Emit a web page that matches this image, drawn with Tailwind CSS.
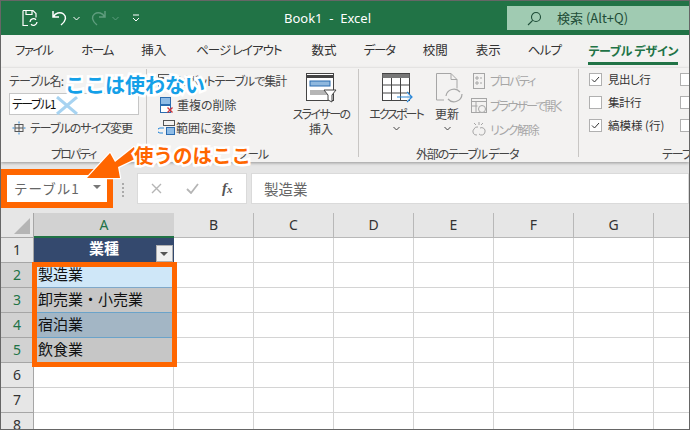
<!DOCTYPE html>
<html lang="ja">
<head>
<meta charset="UTF-8">
<title>Excel</title>
<script src="https://cdn.jsdelivr.net/npm/@tailwindcss/browser@4"></script>
</head>
<body class="w-[690px] h-[430px] overflow-hidden bg-white font-['Noto_Sans_CJK_JP','Noto_Sans',sans-serif] text-[#444] [font-feature-settings:'palt']">
<div class="relative w-[690px] h-[430px] overflow-hidden border border-[#666]">

  <!-- title bar -->
  <div class="h-[34px] bg-[#217346] flex items-center text-white relative">
    <svg class="ml-[20px] w-[18px] h-[18px]" viewBox="0 0 18 18" fill="none" stroke="#fff" stroke-width="1.2"><path d="M2 1.5h10l3 3v4M2 1.5v15h5M5 1.5v4h6v-4"/><path d="M9 13a3.5 3.5 0 0 1 6-2.200M16 13a3.500 3.500 0 0 1-6 2.200" stroke-width="1.300"/></svg>
    <svg class="ml-[12px] w-[18px] h-[18px]" viewBox="0 0 18 18" fill="none" stroke="#fff" stroke-width="1.500"><path d="M2 2v6h6M2.500 8C4 4 9 2.500 12.500 5c3 2.500 3 6.500-2.500 11"/></svg>
    <svg class="ml-[4px] w-[7px] h-[5px]" viewBox="0 0 7 5" fill="none" stroke="#fff"><path d="M.5 1l3 3 3-3"/></svg>
    <svg class="ml-[9px] w-[18px] h-[18px]" viewBox="0 0 18 18" fill="none" stroke="#5f9d7e" stroke-width="1.500"><path d="M16 2v6h-6M15.500 8C14 4 9 2.500 5.500 5c-3 2.500-3 6.500 2.500 11"/></svg>
    <svg class="ml-[5px] w-[7px] h-[5px]" viewBox="0 0 7 5" fill="none" stroke="#5f9d7e"><path d="M.5 1l3 3 3-3"/></svg>
    <svg class="ml-[13px] w-[8px] h-[8px]" viewBox="0 0 8 8" fill="none" stroke="#fff"><path d="M1 1h6M1 4l3 3 3-3"/></svg>
    <span class="absolute left-[283px] top-[6px] text-[13px] leading-[22px] whitespace-pre font-['Noto_Sans',sans-serif]">Book1  -  Excel</span>
    <div class="absolute left-[506px] top-[5px] w-[182px] h-[24px] bg-[#a0cbb2] flex items-center text-[#1e4d38]">
      <svg class="ml-[20px] w-[15px] h-[15px]" viewBox="0 0 15 15" fill="none" stroke="#1e4d38" stroke-width="1.100"><circle cx="9" cy="6" r="4.500"/><path d="M5.700 9.300L1 14"/></svg>
      <span class="ml-[15px] text-[13px] whitespace-nowrap">検索 (Alt+Q)</span>
    </div>
  </div>

  <!-- tabs -->
  <div class="h-[33px] bg-[#f3f2f1] flex items-center text-[12.500px] text-[#333] relative whitespace-nowrap pl-[14px] pb-[2px]">
    <span class="tracking-[-1.500px]">ファイル</span>
    <span class="ml-[29px] tracking-[-1.300px]">ホーム</span>
    <span class="ml-[28px]">挿入</span>
    <span class="ml-[30px] tracking-[-1px]">ページ レイアウト</span>
    <span class="ml-[30px]">数式</span>
    <span class="ml-[27px] tracking-[-1.300px]">データ</span>
    <span class="ml-[28px]">校閲</span>
    <span class="ml-[28px]">表示</span>
    <span class="ml-[27px] tracking-[-0.700px]">ヘルプ</span>
    <span class="ml-[27px] text-[#217346] font-bold relative tracking-[-0.300px] text-[12px]">テーブル デザイン<span class="absolute left-0 right-0 top-[20px] h-[3px] bg-[#217346]"></span></span>
  </div>

  <!-- ribbon -->
  <div class="h-[94px] bg-[#f3f2f1] flex text-[12px] text-[#444] whitespace-nowrap shadow-[0_1px_3px_rgba(0,0,0,0.35)] relative z-10">

    <!-- properties -->
    <div class="w-[145px] shrink-0 relative flex flex-col pl-[8px] pt-[4px]">
      <span class="leading-[18px] tracking-[-0.800px]">テーブル名:</span>
      <div class="mt-[3px] w-[130px] h-[22px] bg-white border border-[#c6c6c6] text-[12px] tracking-[-1.500px] leading-[20px] text-[#111] pl-[2px]">テーブル1</div>
      <div class="mt-[4px] flex items-center gap-[4px] pl-[3px]">
        <svg class="w-[14px] h-[14px] shrink-0" viewBox="0 0 14 14" fill="none" stroke="#555"><rect x="3" y="3.500" width="8" height="7"/><path d="M3 7h8M7 3.500v7"/><path d="M7 .5v2M7 11.500v2M.5 7h2M11.500 7h2" stroke="#2b88d8"/></svg>
        <span class="tracking-[-1px]">テーブルのサイズ変更</span>
      </div>
      <span class="absolute left-[50px] top-[77px] leading-[18px] tracking-[-1.800px]">プロパティ</span>
    </div>
    <div class="w-px h-[88px] mt-[1px] bg-[#c8c6c4]"></div>

    <!-- tools -->
    <div class="w-[86px] shrink-0 relative flex flex-col pl-[11px] pt-[4px] gap-[6px]">
      <div class="flex items-center h-[18px]">
        <svg class="w-[16px] h-[14px] shrink-0" viewBox="0 0 16 14" fill="none" stroke="#555"><rect x=".5" y=".5" width="15" height="13"/><path d="M.5 4h15" stroke-width="2"/></svg>
        <span class="ml-[3px] tracking-[-1px]">ピボットテーブルで集計</span>
      </div>
      <div class="flex items-center gap-[3px] h-[18px] pl-[2px]">
        <svg class="w-[14px] h-[17px] shrink-0" viewBox="0 0 14 17" fill="none"><rect x=".5" y=".5" width="10" height="7" fill="#8fbce6" stroke="#2b6cb0"/><rect x=".5" y="8.500" width="10" height="7" fill="#fff" stroke="#2b6cb0"/><path d="M7.500 10.500l5 5M12.500 10.500l-5 5" stroke="#d13438" stroke-width="1.400"/></svg>
        <span>重複の削除</span>
      </div>
      <div class="flex items-center gap-[1px] h-[18px] mt-[-1px]">
        <svg class="w-[17px] h-[16px] shrink-0" viewBox="0 0 17 16" fill="none" stroke="#555"><rect x="5.500" y=".5" width="11" height="5"/><rect x="8.500" y="7.500" width="8" height="7" fill="#8fbce6" stroke="#2b6cb0"/><path d="M6 8H2a1.500 1.500 0 0 0 0 5h3" stroke="#2b88d8"/></svg>
        <span>範囲に変換</span>
      </div>
      <span class="absolute left-[90px] top-[77px] leading-[18px] tracking-[-1px]">ツール</span>
    </div>

    <!-- slicer -->
    <div class="w-[125px] shrink-0 flex flex-col items-center pt-[4px] pr-[4px] pl-[55px]">
      <svg class="w-[32px] h-[30px] shrink-0 mt-[1px] ml-[2px]" viewBox="0 0 32 30" fill="none"><rect x=".5" y=".5" width="27" height="27" stroke="#444" fill="#fff"/><path d="M.5 3.500h27" stroke="#444" stroke-width="3"/><rect x="4" y="8" width="20" height="5" fill="#8fb8de" stroke="#2b6cb0"/><rect x="4" y="17" width="20" height="5" fill="#b5b5b5"/><path d="M18 17h12l-4 5v7l-4-2v-5z" fill="#fff" stroke="#444"/></svg>
      <span class="leading-[15px] mt-[3px] tracking-[-1.600px]">スライサーの</span>
      <span class="leading-[15px]">挿入</span>
    </div>
    <div class="w-px h-[88px] mt-[1px] bg-[#c8c6c4]"></div>

    <!-- external data -->
    <div class="w-[219px] shrink-0 relative flex">
      <div class="w-[74px] shrink-0 flex flex-col items-center pt-[4px]">
        <svg class="w-[32px] h-[30px] shrink-0 mt-[1px] ml-[4px]" viewBox="0 0 32 30" fill="none"><rect x=".5" y=".5" width="27" height="27" stroke="#444" fill="#fff"/><path d="M.5 3h27" stroke="#777" stroke-width="4"/><path d="M.5 12h27M.5 20h27M9.500 5v23M18.500 5v23" stroke="#444"/><path d="M15 24h15M25 19l5 5-5 5" stroke="#2b88d8" stroke-width="1.200" fill="#f3f2f1"/></svg>
        <span class="leading-[18px] mt-[2px] tracking-[-2px]">エクスポート</span>
        <svg class="w-[7px] h-[5px] mt-[3px]" viewBox="0 0 7 5" fill="none" stroke="#444"><path d="M.5 1l3 3 3-3"/></svg>
      </div>
      <div class="w-[28px] shrink-0 flex flex-col items-center pt-[4px]">
        <svg class="w-[28px] h-[32px] shrink-0 mt-[1px] ml-[6px]" viewBox="0 0 28 32" fill="none" stroke="#a6a6a6"><path d="M.5 27V.5H15l6 6v9M15 .5v6h6M.5 27H8"/><path d="M10 23a8 8 0 0 1 14-4M26 21a8 8 0 0 1-14 5" stroke-width="1.200"/></svg>
        <span class="leading-[18px]">更新</span>
        <svg class="w-[7px] h-[5px] mt-[3px]" viewBox="0 0 7 5" fill="none" stroke="#444"><path d="M.5 1l3 3 3-3"/></svg>
      </div>
      <div class="flex flex-col text-[#a6a6a6] pt-[4px] gap-[7px]">
        <div class="flex items-center gap-[5px] h-[17px] pl-[12px]">
          <svg class="w-[12px] h-[16px] shrink-0" viewBox="0 0 12 16" fill="none" stroke="#a6a6a6"><rect x=".5" y=".5" width="11" height="15"/><path d="M3 4h2v2H3zM3 9h2v2H3zM7 5h2M7 10h2"/></svg>
          <span class="tracking-[-1.800px]">プロパティ</span>
        </div>
        <div class="flex items-center gap-[3px] h-[17px] pl-[10px] mt-[1px]">
          <svg class="w-[16px] h-[16px] shrink-0" viewBox="0 0 16 16" fill="none" stroke="#a6a6a6"><rect x=".5" y=".5" width="15" height="14"/><path d="M.5 3.500h15M.5 8h6M5 3.500v11"/><circle cx="11" cy="11" r="3.500" fill="#f3f2f1"/></svg>
          <span class="tracking-[-1.800px]">ブラウザーで開く</span>
        </div>
        <div class="flex items-center gap-[2px] h-[17px] pl-[10px]">
          <svg class="w-[17px] h-[17px] shrink-0" viewBox="0 0 17 17" fill="none" stroke="#a6a6a6"><path d="M7 6a3.500 3.500 0 0 0-4 2 3.500 3.500 0 0 0 3 6M9 7a3.500 3.500 0 0 1 5 4 3.500 3.500 0 0 1-6 2M8 1v3M12 2l-2 2M3 2l2 2"/></svg>
          <span class="tracking-[-1.400px]">リンク解除</span>
        </div>
      </div>
      <span class="absolute left-[57px] top-[77px] leading-[18px] tracking-[-1.200px]">外部のテーブル データ</span>
    </div>
    <div class="w-px h-[88px] mt-[1px] bg-[#c8c6c4]"></div>

    <!-- style options -->
    <div class="flex-1 relative flex flex-col pl-[10px] pt-[5px] gap-[10px] text-[#333] text-[11.500px]">
      <div class="flex items-center gap-[6px] h-[13px]">
        <span class="w-[13px] h-[13px] bg-white border border-[#b0b0b0] flex items-center justify-center"><svg class="w-[9px] h-[9px]" viewBox="0 0 9 9" fill="none" stroke="#333"><path d="M1 4.500l2.500 2.500L8 2"/></svg></span>
        <span class="tracking-[-0.500px]">見出し行</span>
        <span class="absolute left-[101px] w-[13px] h-[13px] bg-white border border-[#b0b0b0]"></span>
      </div>
      <div class="flex items-center gap-[6px] h-[13px]">
        <span class="w-[13px] h-[13px] bg-white border border-[#b0b0b0]"></span>
        <span class="tracking-[-0.500px]">集計行</span>
        <span class="absolute left-[101px] w-[13px] h-[13px] bg-white border border-[#b0b0b0]"></span>
      </div>
      <div class="flex items-center gap-[6px] h-[13px]">
        <span class="w-[13px] h-[13px] bg-white border border-[#b0b0b0] flex items-center justify-center"><svg class="w-[9px] h-[9px]" viewBox="0 0 9 9" fill="none" stroke="#333"><path d="M1 4.500l2.500 2.500L8 2"/></svg></span>
        <span>縞模様 (行)</span>
        <span class="absolute left-[101px] w-[13px] h-[13px] bg-white border border-[#b0b0b0]"></span>
      </div>
      <span class="absolute left-[83px] top-[77px] leading-[18px] text-[12px] tracking-[-1px] text-[#444]">テーブル スタイルのオプション</span>
    </div>
  </div>

  <!-- formula bar -->
  <div class="h-[51px] bg-[#e6e6e6] flex items-start pt-[11px] [font-feature-settings:normal]">
    <div class="w-[108px] h-[31px] ml-[4px] bg-white flex items-center text-[13.500px] text-[#666] pl-[9px] relative">
      <span class="tracking-[1px]">テーブル1</span>
      <span class="absolute right-[12px] top-[12px] w-0 h-0 border-x-[4px] border-x-transparent border-t-[4px] border-t-[#777]"></span>
    </div>
    <div class="ml-[9px] mt-[10px] flex flex-col gap-[2px]">
      <span class="w-[2px] h-[2px] bg-[#aaa]"></span><span class="w-[2px] h-[2px] bg-[#aaa]"></span><span class="w-[2px] h-[2px] bg-[#aaa]"></span><span class="w-[2px] h-[2px] bg-[#aaa]"></span>
    </div>
    <div class="ml-[13px] w-[110px] h-[31px] bg-white border border-[#dadada] flex items-center text-[#b5b5b5] relative">
      <svg class="absolute left-[13px] top-[9px] w-[11px] h-[11px]" viewBox="0 0 11 11" fill="none" stroke="#b5b5b5" stroke-width="1.400"><path d="M1 1l9 9M10 1l-9 9"/></svg>
      <svg class="absolute left-[48px] top-[9px] w-[13px] h-[11px]" viewBox="0 0 13 11" fill="none" stroke="#b5b5b5" stroke-width="1.800"><path d="M1 6l4 4 7-9"/></svg>
      <span class="absolute left-[84px] top-[4px] text-[15px] leading-[20px] italic font-bold text-[#555] font-['Liberation_Serif',serif]">f<span class="text-[11px]">x</span></span>
    </div>
    <div class="ml-[4px] flex-1 h-[31px] bg-white border border-[#dadada] flex items-center text-[14.500px] text-[#666] pl-[12px]">製造業</div>
  </div>

  <!-- sheet -->
  <div class="grid grid-cols-[33px_140px_80px_80px_80px_80px_80px_80px_1fr] grid-rows-[25px_25px_25px_25px_25px_25px_25px_25px_25px] text-[15px] text-[#333] leading-none [font-feature-settings:normal]">
    <!-- header row -->
    <div class="bg-[#e6e6e6] border-r border-b border-[#a6a6a6] relative"><span class="absolute right-[3px] bottom-[3px] w-0 h-0 border-l-[16px] border-l-transparent border-b-[16px] border-b-[#b5b5b5]"></span></div>
    <div class="bg-[#d2d2d2] border-b-2 border-[#217346] flex items-center justify-center text-[#217346] font-['Noto_Sans',sans-serif] text-[14px]">A</div>
    <div class="bg-[#e6e6e6] border-r border-b border-[#b8b8b8] flex items-center justify-center font-['Noto_Sans',sans-serif] text-[14px]">B</div>
    <div class="bg-[#e6e6e6] border-r border-b border-[#b8b8b8] flex items-center justify-center font-['Noto_Sans',sans-serif] text-[14px]">C</div>
    <div class="bg-[#e6e6e6] border-r border-b border-[#b8b8b8] flex items-center justify-center font-['Noto_Sans',sans-serif] text-[14px]">D</div>
    <div class="bg-[#e6e6e6] border-r border-b border-[#b8b8b8] flex items-center justify-center font-['Noto_Sans',sans-serif] text-[14px]">E</div>
    <div class="bg-[#e6e6e6] border-r border-b border-[#b8b8b8] flex items-center justify-center font-['Noto_Sans',sans-serif] text-[14px]">F</div>
    <div class="bg-[#e6e6e6] border-r border-b border-[#b8b8b8] flex items-center justify-center font-['Noto_Sans',sans-serif] text-[14px]">G</div>
    <div class="bg-[#e6e6e6] border-b border-[#b8b8b8]"></div>
    <!-- row 1 -->
    <div class="bg-[#e6e6e6] border-r border-b border-[#a6a6a6] flex items-center justify-center font-['Noto_Sans',sans-serif] text-[14px]">1</div>
    <div class="bg-[#34496e] text-white font-bold flex items-center justify-center relative pb-[6px]">業種
      <span class="absolute right-[1px] bottom-[1px] w-[17px] h-[17px] bg-[#f0f0f0] border border-[#b0b0b0]"><span class="absolute left-[3px] top-[6px] w-0 h-0 border-x-[4px] border-x-transparent border-t-[4px] border-t-[#555]"></span></span>
    </div>
    <div class="border-r border-b border-[#d4d4d4]"></div><div class="border-r border-b border-[#d4d4d4]"></div><div class="border-r border-b border-[#d4d4d4]"></div><div class="border-r border-b border-[#d4d4d4]"></div><div class="border-r border-b border-[#d4d4d4]"></div><div class="border-r border-b border-[#d4d4d4]"></div><div class="border-b border-[#d4d4d4]"></div>
    <!-- row 2 -->
    <div class="bg-[#d2d2d2] border-r border-b border-[#a6a6a6] flex items-center justify-center text-[#217346] font-['Noto_Sans',sans-serif] text-[14px]">2</div>
    <div class="bg-[#cfe7f8] border-b border-[#7fa8c9] flex items-center pl-[4px] pb-[4px] text-[#111]">製造業</div>
    <div class="border-r border-b border-[#d4d4d4]"></div><div class="border-r border-b border-[#d4d4d4]"></div><div class="border-r border-b border-[#d4d4d4]"></div><div class="border-r border-b border-[#d4d4d4]"></div><div class="border-r border-b border-[#d4d4d4]"></div><div class="border-r border-b border-[#d4d4d4]"></div><div class="border-b border-[#d4d4d4]"></div>
    <!-- row 3 -->
    <div class="bg-[#d2d2d2] border-r border-b border-[#a6a6a6] flex items-center justify-center text-[#217346] font-['Noto_Sans',sans-serif] text-[14px]">3</div>
    <div class="bg-[#c6c6c6] border-b border-[#6ba3c9] flex items-center pl-[4px] pb-[4px] text-[#111]">卸売業・小売業</div>
    <div class="border-r border-b border-[#d4d4d4]"></div><div class="border-r border-b border-[#d4d4d4]"></div><div class="border-r border-b border-[#d4d4d4]"></div><div class="border-r border-b border-[#d4d4d4]"></div><div class="border-r border-b border-[#d4d4d4]"></div><div class="border-r border-b border-[#d4d4d4]"></div><div class="border-b border-[#d4d4d4]"></div>
    <!-- row 4 -->
    <div class="bg-[#d2d2d2] border-r border-b border-[#a6a6a6] flex items-center justify-center text-[#217346] font-['Noto_Sans',sans-serif] text-[14px]">4</div>
    <div class="bg-[#a3b6c5] border-b border-[#6ba3c9] flex items-center pl-[4px] pb-[4px] text-[#111]">宿泊業</div>
    <div class="border-r border-b border-[#d4d4d4]"></div><div class="border-r border-b border-[#d4d4d4]"></div><div class="border-r border-b border-[#d4d4d4]"></div><div class="border-r border-b border-[#d4d4d4]"></div><div class="border-r border-b border-[#d4d4d4]"></div><div class="border-r border-b border-[#d4d4d4]"></div><div class="border-b border-[#d4d4d4]"></div>
    <!-- row 5 -->
    <div class="bg-[#d2d2d2] border-r border-b border-[#a6a6a6] flex items-center justify-center text-[#217346] font-['Noto_Sans',sans-serif] text-[14px]">5</div>
    <div class="bg-[#c6c6c6] border-b border-[#d4d4d4] flex items-center pl-[4px] pb-[4px] text-[#111]">飲食業</div>
    <div class="border-r border-b border-[#d4d4d4]"></div><div class="border-r border-b border-[#d4d4d4]"></div><div class="border-r border-b border-[#d4d4d4]"></div><div class="border-r border-b border-[#d4d4d4]"></div><div class="border-r border-b border-[#d4d4d4]"></div><div class="border-r border-b border-[#d4d4d4]"></div><div class="border-b border-[#d4d4d4]"></div>
    <!-- rows 6-8 -->
    <div class="bg-[#e6e6e6] border-r border-b border-[#a6a6a6] flex items-center justify-center font-['Noto_Sans',sans-serif] text-[14px]">6</div>
    <div class="border-r border-b border-[#d4d4d4]"></div><div class="border-r border-b border-[#d4d4d4]"></div><div class="border-r border-b border-[#d4d4d4]"></div><div class="border-r border-b border-[#d4d4d4]"></div><div class="border-r border-b border-[#d4d4d4]"></div><div class="border-r border-b border-[#d4d4d4]"></div><div class="border-r border-b border-[#d4d4d4]"></div><div class="border-b border-[#d4d4d4]"></div>
    <div class="bg-[#e6e6e6] border-r border-b border-[#a6a6a6] flex items-center justify-center font-['Noto_Sans',sans-serif] text-[14px]">7</div>
    <div class="border-r border-b border-[#d4d4d4]"></div><div class="border-r border-b border-[#d4d4d4]"></div><div class="border-r border-b border-[#d4d4d4]"></div><div class="border-r border-b border-[#d4d4d4]"></div><div class="border-r border-b border-[#d4d4d4]"></div><div class="border-r border-b border-[#d4d4d4]"></div><div class="border-r border-b border-[#d4d4d4]"></div><div class="border-b border-[#d4d4d4]"></div>
    <div class="bg-[#e6e6e6] border-r border-b border-[#a6a6a6] flex items-center justify-center font-['Noto_Sans',sans-serif] text-[14px]">8</div>
    <div class="border-r border-[#d4d4d4]"></div><div class="border-r border-[#d4d4d4]"></div><div class="border-r border-[#d4d4d4]"></div><div class="border-r border-[#d4d4d4]"></div><div class="border-r border-[#d4d4d4]"></div><div class="border-r border-[#d4d4d4]"></div><div class="border-r border-[#d4d4d4]"></div><div></div>
  </div>

  <!-- annotations -->
  <div class="absolute left-[0px] top-[168px] w-[112px] h-[39px] border-[6px] border-[#ff6600] z-20"></div>
  <div class="absolute left-[31px] top-[261px] w-[145px] h-[105px] border-[5px] border-[#ff6600] z-20"></div>
  <svg class="absolute left-[79px] top-[139px] w-[62px] h-[42px] z-30" viewBox="0 0 62 42"><path d="M7 38L30 13l5 9 19-15 3 11-19 9 2 11z" fill="#ff6600" stroke="#fff" stroke-width="2.500" stroke-linejoin="round" paint-order="stroke"/></svg>
  <svg class="absolute left-[54px] top-[95px] w-[24px] h-[19px] z-20" viewBox="0 0 24 19" fill="none" stroke="#a7d3f1" stroke-width="3"><path d="M2 1l20 17M22 1L2 18"/></svg>
  <div class="absolute left-[64px] top-[70px] z-30 text-[20px] leading-[28px] font-bold text-[#14a0e8] whitespace-nowrap [font-feature-settings:normal] [-webkit-text-stroke:5px_white] [paint-order:stroke_fill]">ここは使わない</div>
  <div class="absolute left-[133px] top-[140px] z-30 text-[19.500px] leading-[28px] font-bold text-[#ff6600] whitespace-nowrap [font-feature-settings:normal] [-webkit-text-stroke:5px_white] [paint-order:stroke_fill]">使うのはここ</div>
</div>
</body>
</html>
